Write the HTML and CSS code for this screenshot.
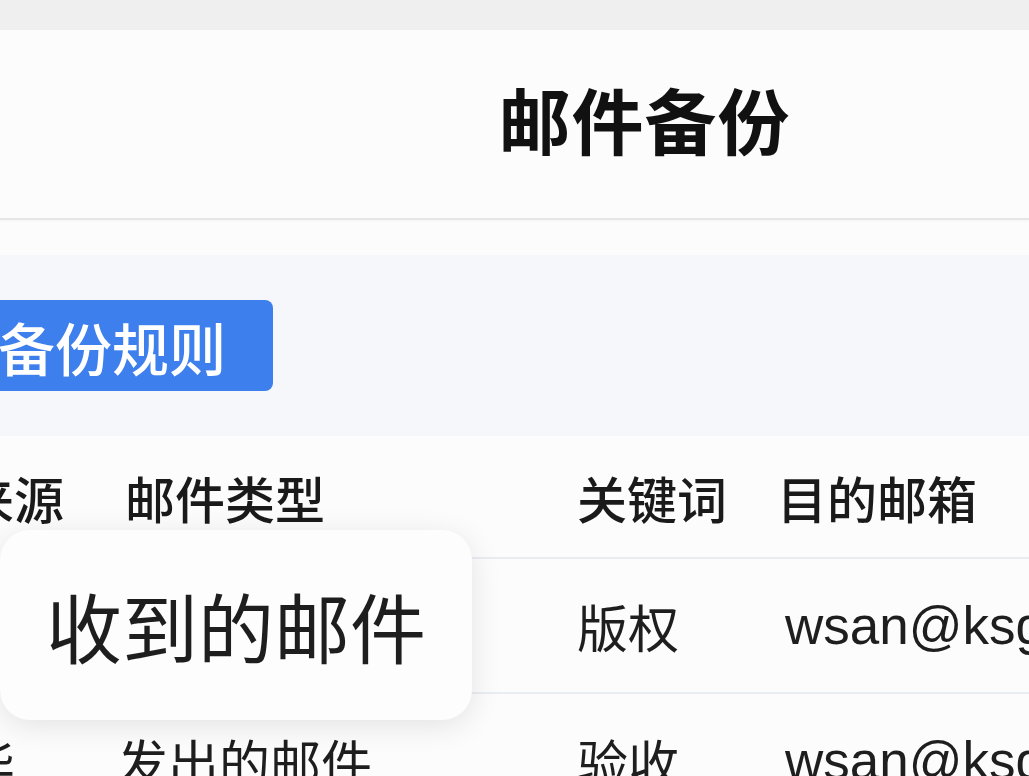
FILE: index.html
```html
<!DOCTYPE html>
<html lang="zh-CN">
<head>
    <meta charset="UTF-8">
    <meta name="viewport" content="width=device-width, initial-scale=1.0">
    <title>邮件备份</title>
    <link rel="stylesheet" href="styles.css">
</head>
<body>
<div class="status-bar"></div>

<header class="page-header">
    <h1>邮件备份</h1>
</header>

<div class="toolbar">
    <button class="rule-button">备份规则</button>
</div>

<div class="rule-table">
    <div class="row head">
        <div class="cell">来源</div>
        <div class="cell type">邮件类型</div>
        <div class="cell">关键词</div>
        <div class="cell mail">目的邮箱</div>
    </div>
    <div class="row">
        <div class="cell">王芳</div>
        <div class="cell type">收到的邮件</div>
        <div class="cell">版权</div>
        <div class="cell mail">wsan@ksgroup.com</div>
    </div>
    <div class="row">
        <div class="cell">华</div>
        <div class="cell type">发出的邮件</div>
        <div class="cell">验收</div>
        <div class="cell mail">wsan@ksgroup.com</div>
    </div>

    <!-- picker bubble shown over the type column -->
    <div class="type-popover">收到的邮件</div>
</div>
</body>
</html>
```

FILE: styles.css
```css
body {
    margin: 0;
    background-color: #fcfcfc;
    font-family: "Liberation Sans", "Noto Sans CJK SC", sans-serif;
    color: #1a1a1a;
    overflow: hidden;
}
.status-bar {
    height: 30px;
    background-color: #efefef;
}
.page-header {
    height: 174px;
    padding-bottom: 14px;
    display: flex;
    align-items: center;
    justify-content: center;
    padding-left: 260px; /* page is wider than the window, title sits right of centre */
    border-bottom: 2px solid #e6e6e6;
    box-shadow: 0 1px 3px rgba(0, 0, 0, 0.04);
}
.page-header h1 {
    margin: 0;
    font-size: 72px;
    font-weight: 700;
    color: #111;
    letter-spacing: 1px;
}
.toolbar {
    margin-top: 35px;
    height: 181px;
    background-color: #f5f7fb;
    display: flex;
    align-items: center;
}
.rule-button {
    margin-left: -60px;
    height: 91px;
    padding: 0 47px 0 58px;
    border: none;
    border-radius: 8px;
    background-color: #3d7fec;
    color: #fff;
    font-family: "Noto Sans CJK SC", sans-serif;
    font-size: 57px;
    font-weight: 500;
}
.rule-table {
    position: relative;
    margin-left: -36px;
    width: calc(100% + 36px);
}
.row {
    display: grid;
    grid-template-columns: 153px 460px 204px 1fr;
    align-items: center;
    height: 133px;
    border-bottom: 2px solid #e9edf2;
    font-size: 51px;
    color: #1e1e1e;
}
.row.head {
    height: 121px;
    font-size: 50px;
    font-weight: 500;
    color: #1a1a1a;
}
.cell {
    white-space: nowrap;
}
.row.head .type {
    padding-left: 8px;
}
.mail {
    font-family: "Liberation Sans", sans-serif;
    font-size: 53px;
    padding-left: 4px;
}
.row.head .mail {
    font-family: "Noto Sans CJK SC", sans-serif;
    font-size: 50px;
    padding-left: 0;
    margin-left: -4px;
}
.type-popover {
    position: absolute;
    left: 36px;
    top: 94px;
    width: 472px;
    height: 190px;
    display: flex;
    align-items: center;
    justify-content: center;
    background-color: #fdfdfd;
    border-radius: 30px;
    box-shadow: 0 6px 30px rgba(0, 0, 0, 0.1);
    font-family: "Noto Sans CJK SC", sans-serif;
    font-size: 76px;
    color: #1e1e1e;
}
```
